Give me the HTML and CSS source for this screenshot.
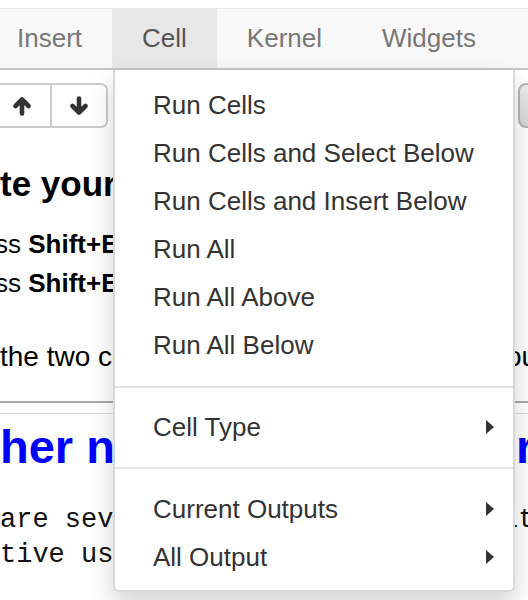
FILE: index.html
```html
<!DOCTYPE html>
<html lang="en">
<head>
<meta charset="utf-8">
<title>Cell menu</title>
<link rel="stylesheet" href="styles.css">
</head>
<body>
<div class="page">
  <div class="topgap"></div>
  <nav class="menubar">
    <ul class="nav">
      <li class="nav-item">Insert</li>
      <li class="nav-item active">Cell</li>
      <li class="nav-item">Kernel</li>
      <li class="nav-item">Widgets</li>
    </ul>
  </nav>

  <div class="toolbar">
    <div class="btn-group">
      <div class="btn btn-up">
        <svg width="22" height="22" viewBox="0 0 22 22"><path d="M11 18.5V5M4.5 11L11 4.5L17.5 11" fill="none" stroke="#333" stroke-width="4.6" stroke-linecap="round" stroke-linejoin="round"/></svg>
      </div>
      <div class="btn btn-down">
        <svg width="22" height="22" viewBox="0 0 22 22"><path d="M11 3.5V17M4.5 11L11 17.5L17.5 11" fill="none" stroke="#333" stroke-width="4.6" stroke-linecap="round" stroke-linejoin="round"/></svg>
      </div>
    </div>
    <div class="select-btn"></div>
  </div>

  <div class="notebook">
    <h2 class="md-h2">te your code</h2>
    <p class="md-line">ss <b>Shift+Enter</b> to run the cell</p>
    <p class="md-line">ss <b>Shift+Enter</b> again</p>
    <div class="md-row"><span class="lead">the two cells above</span><span class="tail tail-ou">ou</span></div>
    <hr class="rule-dark">
    <hr class="rule-light">
    <div class="md-row blue-h"><span class="lead">her notebooks</span><span class="tail tail-r">r</span></div>
    <div class="mono-row first"><span class="lead">are several ways to</span><span class="tail tail-lt">lt</span></div>
    <div class="mono-row"><span class="lead">tive use</span></div>
  </div>

  <ul class="dropdown">
    <li class="dd-item">Run Cells</li>
    <li class="dd-item">Run Cells and Select Below</li>
    <li class="dd-item">Run Cells and Insert Below</li>
    <li class="dd-item">Run All</li>
    <li class="dd-item">Run All Above</li>
    <li class="dd-item">Run All Below</li>
    <li class="dd-divider first"></li>
    <li class="dd-item">Cell Type <span class="caret-right"></span></li>
    <li class="dd-divider"></li>
    <li class="dd-item">Current Outputs <span class="caret-right"></span></li>
    <li class="dd-item">All Output <span class="caret-right"></span></li>
  </ul>
</div>
</body>
</html>
```

FILE: styles.css
```css
* { box-sizing: border-box; margin: 0; padding: 0; }

html, body {
  width: 528px;
  height: 600px;
  overflow: hidden;
  background: #fff;
}

body {
  font-family: "Liberation Sans", Arial, sans-serif;
  color: #000;
}

.page {
  position: relative;
  width: 528px;
  height: 600px;
  overflow: hidden;
}

.topgap { height: 8px; }

/* menubar */
.menubar {
  height: 62px;
  border-top: 1px solid #e7e7e7;
  border-bottom: 2px solid #c4c4c4;
  background: #f8f8f8;
}

.nav {
  display: flex;
  list-style: none;
  margin-left: -13px;
  height: 100%;
}

.nav-item {
  padding: 0 30px;
  line-height: 59px;
  font-size: 26px;
  color: #777;
  white-space: nowrap;
}

.nav-item.active {
  background: #e7e7e7;
  color: #555;
}

/* toolbar */
.toolbar {
  display: flex;
  align-items: flex-start;
  height: 68px;
  padding-top: 13px;
}

.btn-group {
  display: flex;
  height: 45px;
  margin-left: -8px;
  border: 2px solid #ccc;
  border-radius: 7px;
  background: #fff;
  overflow: hidden;
}

.btn {
  display: flex;
  align-items: center;
  justify-content: center;
  background: #fff;
}

.btn-up { width: 56px; }
.btn-down { width: 56px; border-left: 2px solid #ccc; }

.select-btn {
  margin-left: auto;
  margin-right: -30px;
  width: 40px;
  height: 45px;
  border: 2px solid #b5b5b5;
  border-radius: 8px;
  background: linear-gradient(#ececec, #d8d8d8);
}

/* notebook content */
.notebook { padding-top: 26px; }

.md-h2 {
  font-size: 35px;
  font-weight: bold;
  line-height: 40px;
  white-space: nowrap;
}

.md-line {
  font-size: 26px;
  line-height: 39px;
  white-space: nowrap;
  text-indent: -5px;
}

.md-h2 + .md-line { margin-top: 21px; }

.md-row {
  display: flex;
  font-size: 28px;
  line-height: 39px;
  margin-top: 34px;
  white-space: nowrap;
}

.lead {
  flex: 1;
  overflow: hidden;
}

.tail {
  flex: 0 0 auto;
  white-space: nowrap;
  overflow: visible;
}

.tail-ou { width: 22px; }
.tail-r { width: 12px; }
.tail-lt { width: 26px; }

.rule-dark {
  border: 0;
  height: 2px;
  background: #a9a9a9;
  margin-top: 25px;
}

.rule-light {
  border: 0;
  height: 1px;
  background: #dcdcdc;
  margin-top: 10px;
}

.blue-h {
  margin-top: 7px;
  font-size: 47px;
  line-height: 52px;
  font-weight: bold;
  color: #0000ff;
}

.mono-row {
  display: flex;
  font-family: "Liberation Mono", "Courier New", monospace;
  font-size: 27px;
  line-height: 35px;
  white-space: nowrap;
  color: #111;
}

.mono-row.first { margin-top: 30px; }

/* dropdown */
.dropdown {
  position: absolute;
  top: 70px;
  left: 113px;
  width: 402px;
  padding: 11px 0 9px;
  list-style: none;
  background: #fff;
  border: 2px solid rgba(0, 0, 0, 0.15);
  border-top: 0;
  border-radius: 0 0 6px 6px;
  box-shadow: 0 12px 24px rgba(0, 0, 0, 0.175);
  font-size: 26px;
  color: #333;
}

.dd-item {
  display: flex;
  align-items: center;
  justify-content: space-between;
  height: 48px;
  line-height: 48px;
  padding: 0 19px 0 38px;
  white-space: nowrap;
}

.dd-divider {
  height: 2px;
  margin: 16px 0;
  background: #e5e5e5;
}

.dd-divider.first { margin: 17px 0 15px; }

.caret-right {
  width: 0;
  height: 0;
  border-left: 8px solid #333;
  border-top: 7.5px solid transparent;
  border-bottom: 7.5px solid transparent;
}
```
